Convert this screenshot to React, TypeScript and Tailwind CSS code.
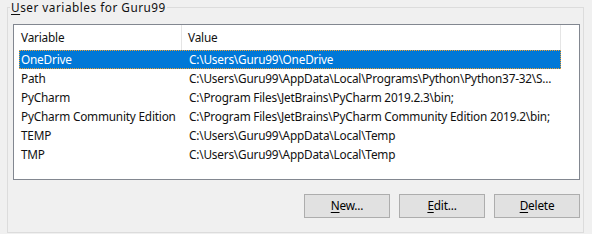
import React from "react";

const rows = [
  ["OneDrive", "C:\\Users\\Guru99\\OneDrive"],
  ["Path", "C:\\Users\\Guru99\\AppData\\Local\\Programs\\Python\\Python37-32\\S..."],
  ["PyCharm", "C:\\Program Files\\JetBrains\\PyCharm 2019.2.3\\bin;"],
  ["PyCharm Community Edition", "C:\\Program Files\\JetBrains\\PyCharm Community Edition 2019.2\\bin;"],
  ["TEMP", "C:\\Users\\Guru99\\AppData\\Local\\Temp"],
  ["TMP", "C:\\Users\\Guru99\\AppData\\Local\\Temp"],
];

function Btn({ first, rest }: { first: string; rest: string }) {
  return (
    <button className="w-[86px] h-[24px] bg-[#e1e1e1] border border-[#adadad] text-black flex items-center justify-center leading-none">
      <span>
        <span className="underline underline-offset-2">{first}</span>
        {rest}
      </span>
    </button>
  );
}

export default function App() {
  return (
    <div
      className="w-[592px] h-[234px] bg-[#f0f0f0] overflow-hidden pt-[7px] pl-[7px] pr-[8px] pb-[1px] text-[11.8px] tracking-[-0.2px] text-[#111]"
      style={{ fontFamily: '"Noto Sans", "Open Sans", sans-serif' }}
    >
      <div className="relative h-full border border-[#dcdcdc] pt-[16px] pl-[5px] pr-[3px] flex flex-col">
        <div className="absolute left-[2px] top-[-8px] px-[1px] bg-[#f0f0f0] leading-[14px] tracking-[0.5px] whitespace-nowrap">
          <span className="underline underline-offset-2">U</span>ser variables for Guru99
        </div>
        <div className="h-[156px] border border-[#828790] bg-white flex flex-col">
          <div className="h-[25px] flex items-center shrink-0">
            <div className="w-[168px] shrink-0 h-full pl-[7px] flex items-center border-r border-[#e5e5e5]">Variable</div>
            <div className="w-[379px] shrink-0 h-full pl-[6px] flex items-center border-r border-[#e5e5e5]">Value</div>
          </div>
          {rows.map(([k, v], i) => (
            <div key={k} className="h-[19px] flex pl-[5px] shrink-0">
              <div
                className={
                  "w-[542px] shrink-0 h-full flex items-center whitespace-nowrap " +
                  (i === 0 ? "bg-[#0078d7] text-white outline outline-1 outline-dotted outline-[#f0a030] -outline-offset-1" : "")
                }
              >
                <div className="w-[163px] shrink-0 pl-[2px] overflow-hidden">{k}</div>
                <div className="w-[379px] shrink-0 pl-[7px] overflow-hidden">{v}</div>
              </div>
            </div>
          ))}
        </div>
        <div className="flex justify-end gap-[9px] mt-[14px]">
          <Btn first="N" rest="ew..." />
          <Btn first="E" rest="dit..." />
          <Btn first="D" rest="elete" />
        </div>
      </div>
    </div>
  );
}
